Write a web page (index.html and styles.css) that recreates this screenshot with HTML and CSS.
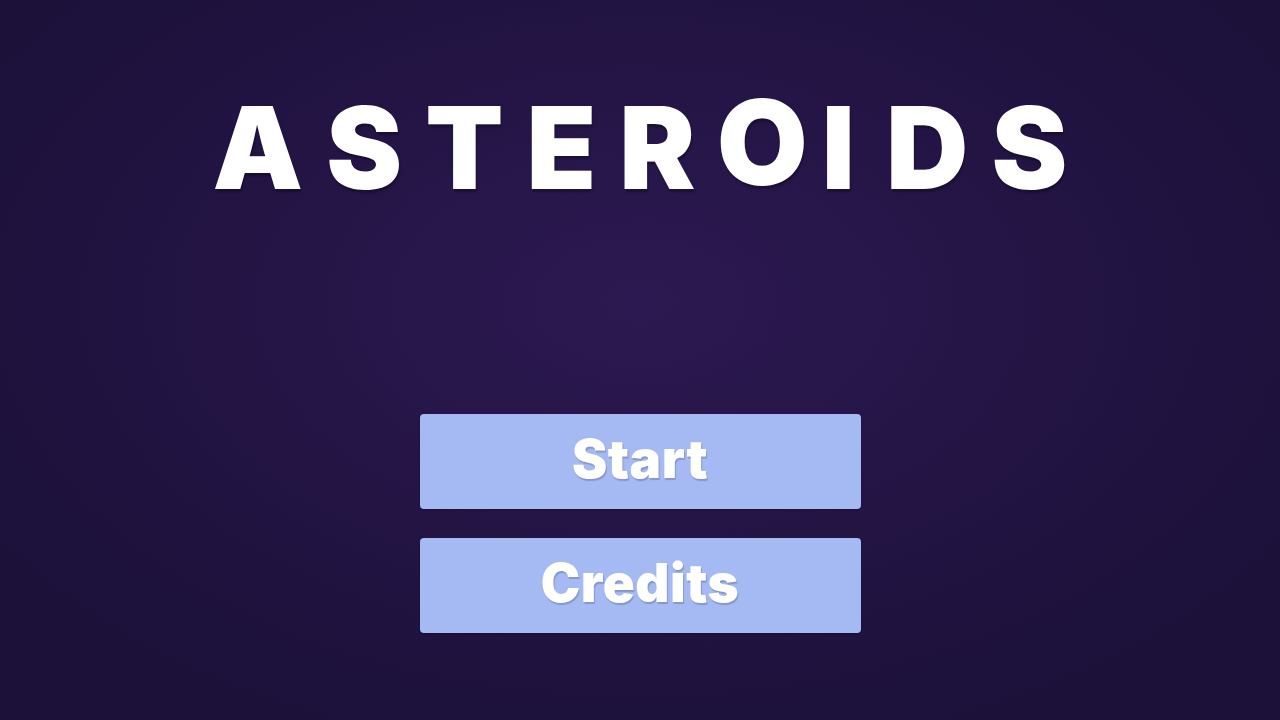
FILE: index.html
```html
<!DOCTYPE html>
<html lang="en">
<head>
<meta charset="utf-8">
<title>Asteroids</title>
<link rel="stylesheet" href="styles.css">
</head>
<body>
<main class="screen">
  <h1 class="title">
    <span class="ch">A</span><span class="ch">S</span><span class="ch">T</span><span class="ch">E</span><span class="ch">R</span><span class="ch ch-o">O</span><span class="ch ch-i">I</span><span class="ch">D</span><span class="ch">S</span>
  </h1>
  <nav class="menu">
    <button class="btn">Start</button>
    <button class="btn">Credits</button>
  </nav>
</main>
</body>
</html>
```
FILE: styles.css
```css
html, body {
  margin: 0;
  padding: 0;
  height: 100%;
}
body {
  background: radial-gradient(ellipse 60% 65% at 50% 42%, #2c1951 0%, #231444 55%, #1b1139 100%);
  font-family: Inter, "Noto Sans", sans-serif;
  overflow: hidden;
}
.screen {
  height: 720px;
  display: flex;
  flex-direction: column;
  align-items: center;
}
.title {
  margin: 105px 0 0 0;
  display: flex;
  align-items: flex-end;
  gap: 23px;
  height: 100px;
  font-weight: 900;
  font-size: 114px;
  line-height: 1;
  color: #ffffff;
  text-shadow: 1px 3px 2px rgba(0, 0, 0, 0.28);
}
.ch {
  display: block;
}
.ch-o {
  transform: translateY(-5px) scale(1.03);
}
.ch-i {
  transform: translateX(-8px);
}
.menu {
  margin-top: 209px;
  display: flex;
  flex-direction: column;
  gap: 29px;
}
.btn {
  width: 441px;
  height: 95px;
  border: none;
  border-radius: 4px;
  background: #a5b9f3;
  box-shadow: 0 1px 2px rgba(0, 0, 0, 0.2);
  color: #ffffff;
  font-family: Inter, "Noto Sans", sans-serif;
  font-weight: 900;
  font-size: 53px;
  letter-spacing: 0.5px;
  text-shadow: 1px 2px 1px rgba(80, 85, 120, 0.35);
  padding: 0 0 6px 0;
  cursor: pointer;
}
```
